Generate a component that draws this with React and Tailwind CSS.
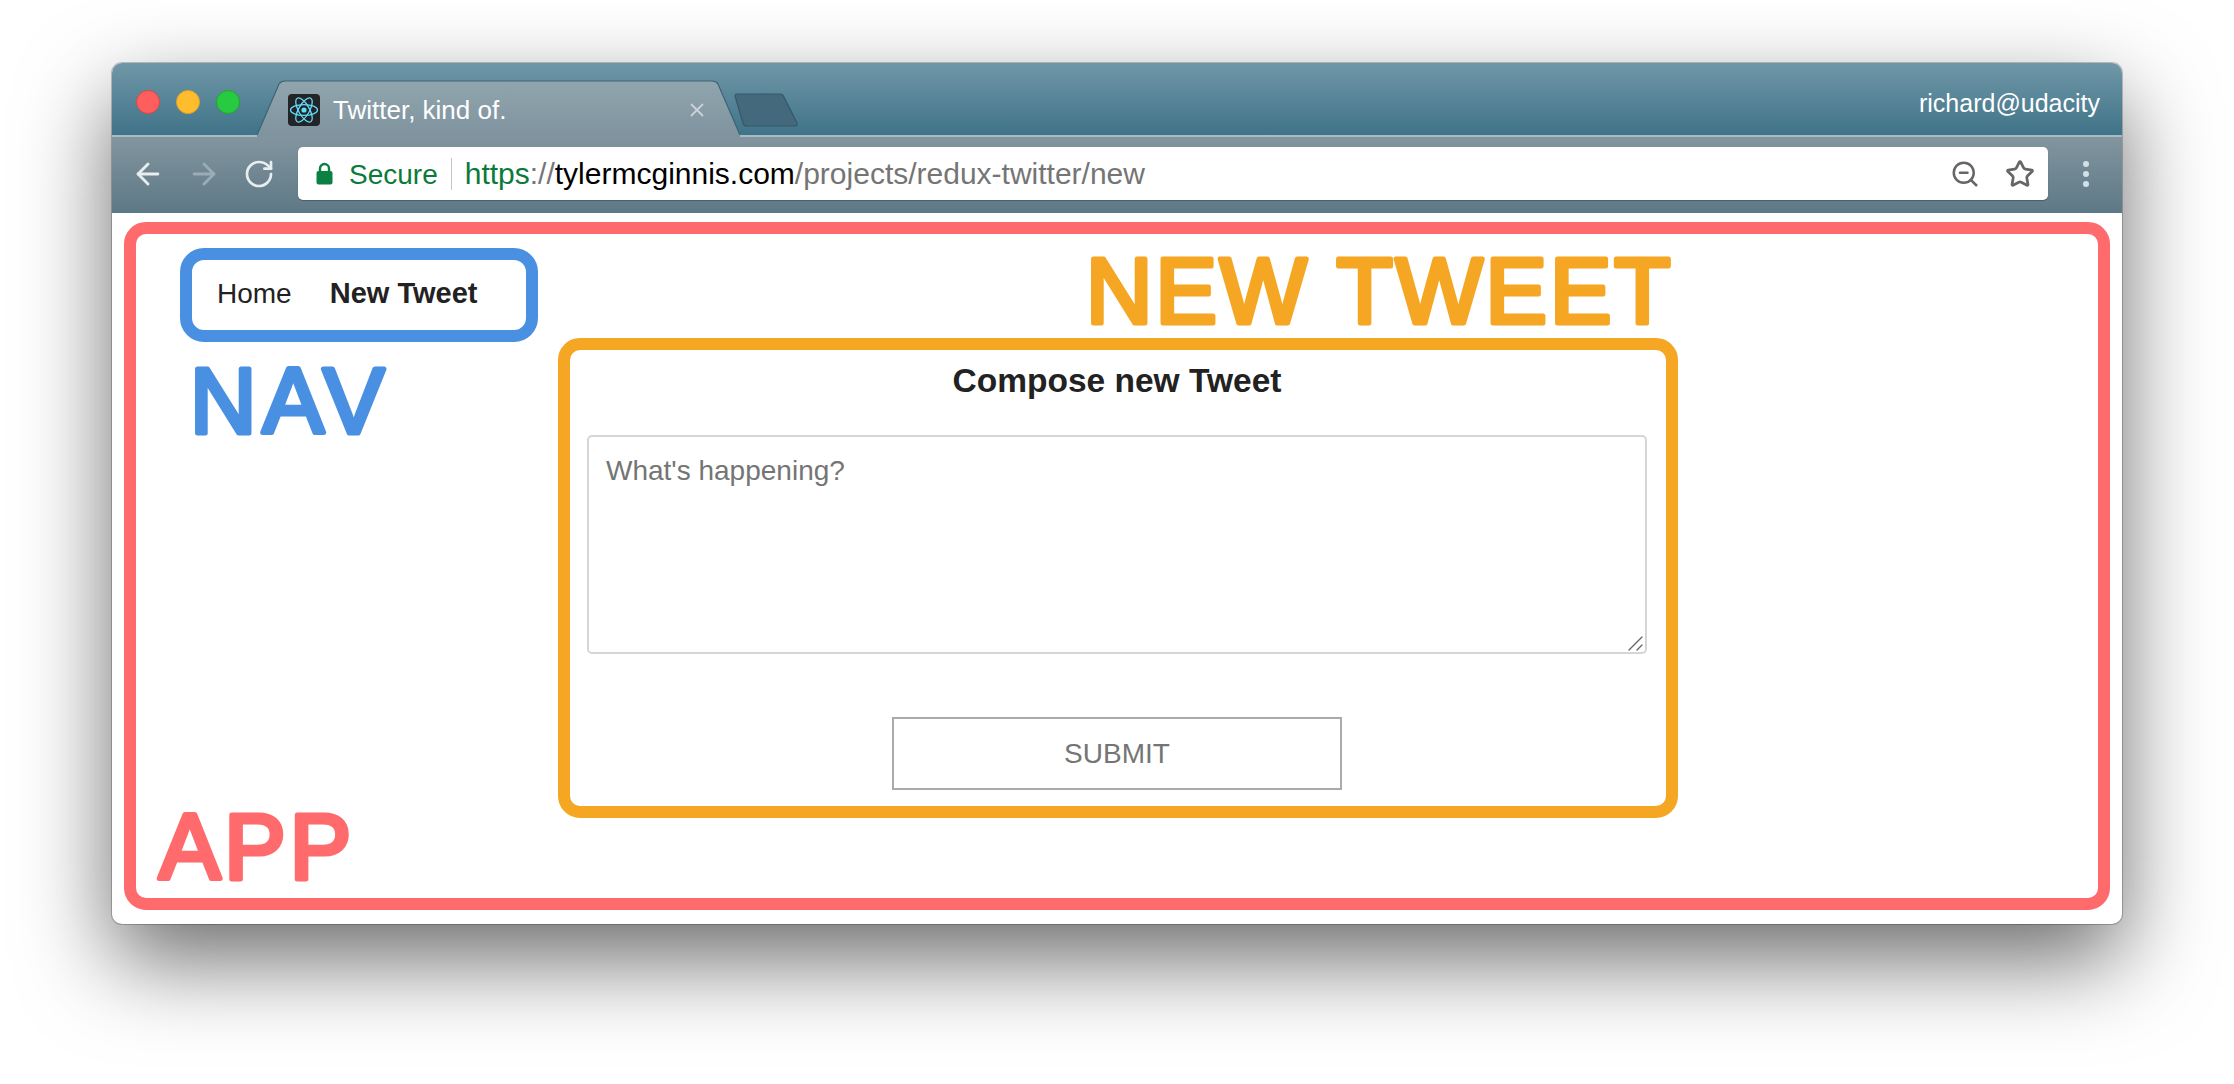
import React from "react";
import { ArrowLeft, ArrowRight, RotateCw, ZoomOut, Star, X } from "lucide-react";

function ReactIcon() {
  return (
    <svg width="32" height="32" viewBox="0 0 32 32" className="shrink-0">
      <rect width="32" height="32" rx="4" fill="#222426" />
      <g fill="none" stroke="#61dafb" strokeWidth="1.3">
        <ellipse cx="16" cy="16" rx="13.5" ry="5.4" />
        <ellipse cx="16" cy="16" rx="13.5" ry="5.4" transform="rotate(60 16 16)" />
        <ellipse cx="16" cy="16" rx="13.5" ry="5.4" transform="rotate(120 16 16)" />
      </g>
      <circle cx="16" cy="16" r="2.6" fill="#61dafb" />
    </svg>
  );
}

function Label({ children, color, w, className, spacing = 4 }) {
  return (
    <svg width={w} height="110" viewBox={`0 0 ${w} 110`} className={className} role="img">
      <text
        x="6"
        y="88"
        fontFamily="'Liberation Sans', Arial, sans-serif"
        fontSize="92"
        fontWeight="400"
        letterSpacing={spacing}
        fill={color}
        stroke={color}
        strokeWidth="5"
        strokeLinejoin="round"
      >
        {children}
      </text>
    </svg>
  );
}

export default function App() {
  return (
    <div className="min-h-[1084px] w-full overflow-hidden bg-white pl-[112px] pt-[63px] font-['Liberation_Sans',Arial,sans-serif]">
      <div className="flex h-[861px] w-[2010px] flex-col rounded-[10px] bg-white shadow-[0_0_0_1px_rgba(0,0,0,0.22),0_36px_90px_rgba(0,0,0,0.58)]">
        {/* title bar */}
        <div className="relative flex h-[74px] shrink-0 items-end rounded-t-[10px] border-b-2 border-[#a6bbc5] bg-gradient-to-b from-[#7097a8] to-[#3f7388] pl-6">
          <div className="mb-[21px] flex gap-4">
            <span className="h-6 w-6 rounded-full border border-[#d9474a] bg-[#ff5f5c]" />
            <span className="h-6 w-6 rounded-full border border-[#dfa02a] bg-[#ffbd2e]" />
            <span className="h-6 w-6 rounded-full border border-[#20a62f] bg-[#28ca41]" />
          </div>
          <div className="relative z-10 -mb-[2px] ml-[17px] flex h-[57px] w-[483px] items-center pl-[31px] pr-[32px] pt-[2px]">
            <svg width="483" height="57" viewBox="0 0 483 57" className="absolute left-0 top-0">
              <defs>
                <linearGradient id="tabg" x1="0" y1="0" x2="0" y2="1">
                  <stop offset="0" stopColor="#90a5ad" />
                  <stop offset="1" stopColor="#7f939f" />
                </linearGradient>
              </defs>
              <path d="M0 57 L0 55 L22 4 Q24 1 28 1 L455 1 Q459 1 461 4 L483 55 L483 57 Z" fill="url(#tabg)" />
              <path d="M0 55 L22 4 Q24 1 28 1 L455 1 Q459 1 461 4 L483 55" fill="none" stroke="#3d6475" strokeWidth="1.2" />
            </svg>
            <div className="relative"><ReactIcon /></div>
            <span className="relative ml-[13px] text-[26px] leading-none text-white">Twitter, kind of.</span>
            <X className="relative ml-auto text-[#c9d3d7]" size={22} strokeWidth={2} />
          </div>
          <svg width="66" height="34" viewBox="0 0 66 34" className="mb-[8px] -ml-[7px]">
            <path d="M2 3 Q2 1 5 1 L47 1 Q50 1 51 4 L64 30 Q65 33 61 33 L14 33 Q11 33 10 30 Z" fill="#44697d" stroke="#34586b" strokeWidth="1.2" />
          </svg>
          <span className="mb-[19px] ml-auto mr-[22px] text-[25px] leading-none text-white">richard@udacity</span>
        </div>

        {/* toolbar */}
        <div className="flex h-[75px] shrink-0 items-center bg-gradient-to-b from-[#82959f] to-[#5e7986] pb-[2px]">
          <div className="flex w-[186px] items-center gap-[22px] pl-[19px]">
            <ArrowLeft className="text-[#e8eef0]" size={34} strokeWidth={2} />
            <ArrowRight className="text-[#9bacb4]" size={34} strokeWidth={2} />
            <RotateCw className="text-[#e8eef0]" size={32} strokeWidth={2} />
          </div>
          <div className="flex h-[53px] w-[1750px] items-center rounded-[5px] bg-white pl-[18px] pr-[16px] text-[28px] leading-none shadow-[0_1px_1px_rgba(0,0,0,0.25)]">
            <svg width="17" height="23" viewBox="0 0 17 23" className="shrink-0">
              <path d="M4 10 V6.5 a4.5 4.5 0 0 1 9 0 V10" fill="none" stroke="#0b8043" strokeWidth="2.4" />
              <rect x="0.5" y="9" width="16" height="13.5" rx="2" fill="#0b8043" />
            </svg>
            <span className="ml-[16px] pt-[2px] text-[#0b7a3b]">Secure</span>
            <span className="ml-[13px] h-8 w-[1px] bg-[#c4c4c4]" />
            <span className="ml-[13px] whitespace-nowrap text-[30px]">
              <span className="text-[#0b7a3b]">https</span>
              <span className="text-[#757575]">://</span>
              <span className="text-black">tylermcginnis.com</span>
              <span className="text-[#757575]">/projects/redux-twitter/new</span>
            </span>
            <ZoomOut className="ml-auto text-[#666666]" size={30} strokeWidth={2} />
            <Star className="ml-[25px] -mr-[3px] text-[#666666]" size={30} strokeWidth={2.2} />
          </div>
          <div className="ml-[35px] flex flex-col gap-[4px]">
            <span className="h-[6px] w-[6px] rounded-full bg-[#d3e0e6]" />
            <span className="h-[6px] w-[6px] rounded-full bg-[#d3e0e6]" />
            <span className="h-[6px] w-[6px] rounded-full bg-[#d3e0e6]" />
          </div>
        </div>

        {/* page */}
        <div className="flex-1 border-t border-[#5e7986] px-3 pb-[14px] pt-[9px]">
          <div className="relative flex h-[688px] items-start rounded-[22px] border-[12px] border-[#ff6b6d] pl-[44px] pt-[14px]">
            <div className="relative w-[358px] shrink-0">
              <nav className="flex h-[94px] items-center gap-[38px] rounded-[24px] border-[12px] border-[#4a90e2] pb-[3px] pl-[25px] text-[28px] leading-none text-[#222222]">
                <span>Home</span>
                <span className="text-[29px] font-bold">New Tweet</span>
              </nav>
              <Label color="#4a90e2" w={240} spacing={6} className="absolute left-[4px] top-[97px]">NAV</Label>
            </div>
            <div className="relative ml-[20px] mt-[90px] flex h-[480px] w-[1120px] shrink-0 flex-col items-center rounded-[22px] border-[12px] border-[#f5a623] pl-[17px] pr-[19px]">
              <Label color="#f5a623" w={640} spacing={3} className="absolute -top-[115px] left-[510px]">NEW TWEET</Label>
              <h3 className="mt-[16px] text-[33.5px] font-bold leading-[30px] text-[#222222]">Compose new Tweet</h3>
              <div className="relative mt-[39px] h-[219px] w-full">
                <textarea
                  readOnly
                  placeholder="What's happening?"
                  className="h-full w-full resize-none rounded-[5px] border-2 border-[#d6d6d6] px-[17px] py-[18px] text-[28px] leading-[32px] outline-none placeholder:text-[#757575]"
                />
                <svg width="16" height="16" viewBox="0 0 16 16" className="absolute bottom-[3px] right-[3px]">
                  <path d="M1 15 L14 2 M9 15 L14 10" stroke="#666666" strokeWidth="1.4" strokeLinecap="round" />
                </svg>
              </div>
              <button
                disabled
                className="mt-[63px] h-[73px] w-[450px] border-2 border-[#aaaaaa] bg-white text-[28px] text-[#757575]"
              >
                SUBMIT
              </button>
            </div>
            <Label color="#ff6b6d" w={260} className="absolute left-[17px] top-[557px]">APP</Label>
          </div>
        </div>
      </div>
    </div>
  );
}
